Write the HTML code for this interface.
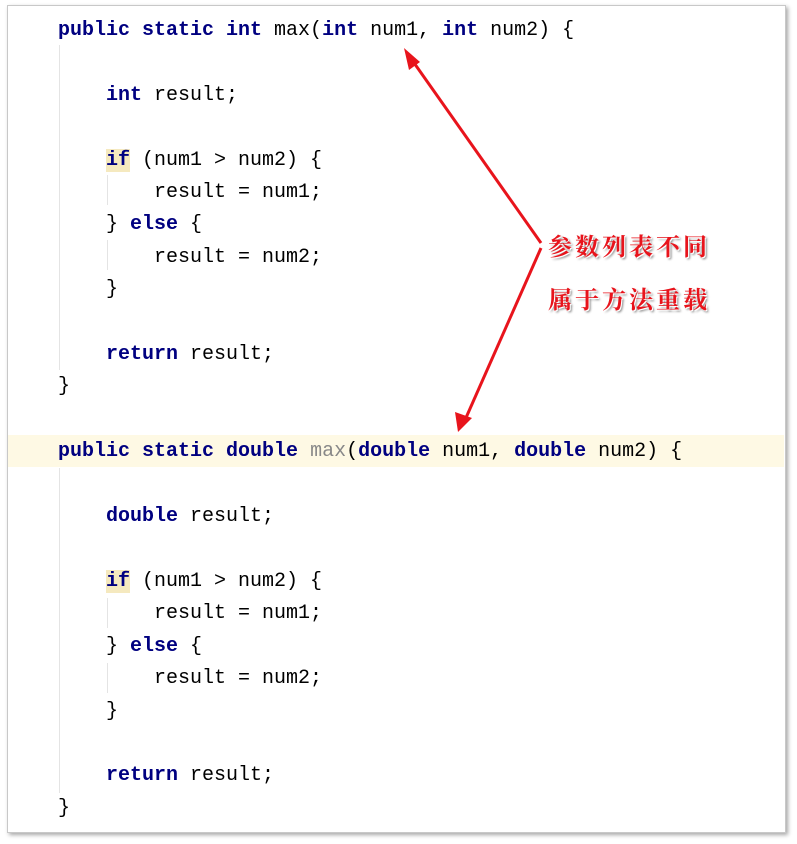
<!DOCTYPE html><html><head><style>
body{margin:0;width:797px;height:844px;background:#fff;overflow:hidden;position:relative}
.frame{position:absolute;left:7px;top:5px;width:777px;height:826px;border:1px solid #c8c8c8;box-shadow:2px 2px 4px rgba(0,0,0,.35);background:#fff}
.code{position:absolute;left:58px;top:15px;font-family:"Liberation Mono",monospace;font-size:20px;line-height:32.4px;color:#000;white-space:pre;margin:0}
.k{color:#000080;font-weight:bold}
.g{color:#888}
.hl{position:absolute;left:8px;top:435px;width:776px;height:32px;background:#fef9e4}
.ifb{background:#f5e9bf}
.guide{position:absolute;width:1px;background:#e4e4e4}
.note{position:absolute;left:548px;font-family:"Noto Serif CJK SC",serif;font-weight:bold;font-size:24px;color:#e8141c;letter-spacing:3px;text-shadow:1px 1px 0 #fff,2px 2px 2px #888}
</style></head><body>
<div class="frame"></div>
<div class="hl"></div>
<div class="guide" style="left:59px;top:45px;height:325px"></div>
<div class="guide" style="left:107px;top:175px;height:30px"></div>
<div class="guide" style="left:107px;top:240px;height:30px"></div>
<div class="guide" style="left:59px;top:468px;height:325px"></div>
<div class="guide" style="left:107px;top:598px;height:30px"></div>
<div class="guide" style="left:107px;top:663px;height:30px"></div>
<pre class="code"><span class="k">public static int</span> max(<span class="k">int</span> num1, <span class="k">int</span> num2) {

    <span class="k">int</span> result;

    <span class="k ifb">if</span> (num1 &gt; num2) {
        result = num1;
    } <span class="k">else</span> {
        result = num2;
    }

    <span class="k">return</span> result;
}

<span class="k">public static double</span> <span class="g">max</span>(<span class="k">double</span> num1, <span class="k">double</span> num2) {

    <span class="k">double</span> result;

    <span class="k ifb">if</span> (num1 &gt; num2) {
        result = num1;
    } <span class="k">else</span> {
        result = num2;
    }

    <span class="k">return</span> result;
}</pre>
<svg style="position:absolute;left:0;top:0" width="797" height="844">
<g stroke="#e8141c" stroke-width="3" fill="none">
<line x1="541" y1="243" x2="412" y2="60"/>
<line x1="541" y1="248" x2="465" y2="420"/>
</g>
<polygon points="404,48 420,62 409,70" fill="#e8141c"/>
<polygon points="458,432 455,412 472,418" fill="#e8141c"/>
</svg>
<div class="note" style="top:227px">参数列表不同</div>
<div class="note" style="top:280px">属于方法重载</div>
</body></html>
